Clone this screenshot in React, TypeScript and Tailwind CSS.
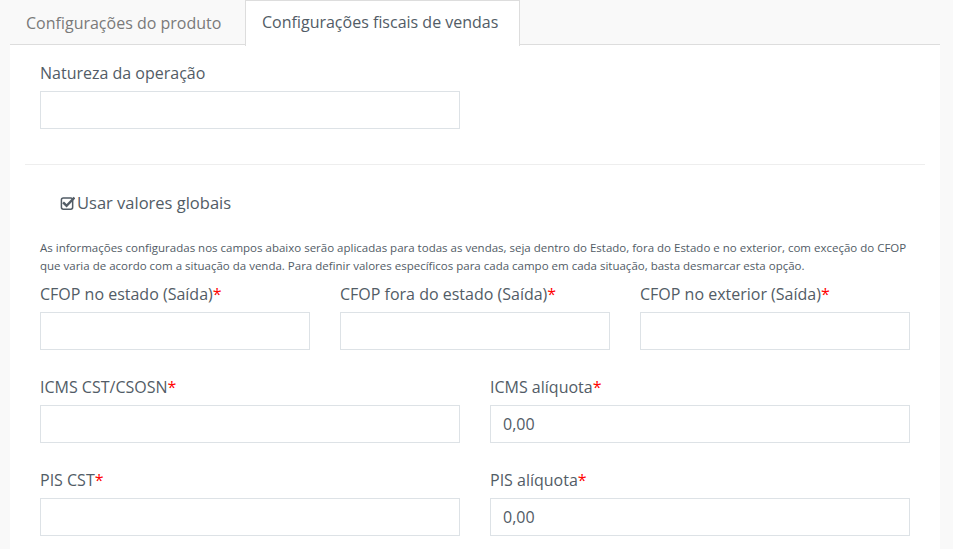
import React from "react";

const font = { fontFamily: '"Open Sans", "Liberation Sans", sans-serif' };

function Field({ label, value, required = true }: { label: string; value?: string; required?: boolean }) {
  return (
    <div className="mb-[27px]">
      <label className="block h-5 leading-5 text-[16px] text-[#525c66] mb-2 whitespace-nowrap">
        {label}
        {required && <span className="text-[#ff0000]">*</span>}
      </label>
      <div className="h-[38px] border border-[#dde2e6] bg-white px-[12px] flex items-center text-[16px] text-[#525c66]">
        {value}
      </div>
    </div>
  );
}

function CheckSquare() {
  return (
    <svg width="15" height="15" viewBox="0 0 16 16" className="text-[#525c66]">
      <rect x="1.5" y="2" width="12" height="12" rx="2" fill="none" stroke="currentColor" strokeWidth="1.6" />
      <path d="M4.2 7.6 L7 10.4 L14.6 2.6" fill="none" stroke="currentColor" strokeWidth="2.6" strokeLinecap="square" />
    </svg>
  );
}

export default function App() {
  return (
    <div className="min-h-[549px] bg-[#f9f9f9] pl-[10px]" style={font}>
      <div className="w-[930px]">
        {/* tab strip */}
        <div className="flex h-[45px] border-b border-[#dddddd]">
          <div className="w-[235px] pl-4 pt-[2px] flex items-center text-[16px] text-[#7a7a7a] whitespace-nowrap">
            Configurações do produto
          </div>
          <div className="w-[275px] pl-4 pb-[3px] flex items-center text-[16px] text-[#525c66] bg-white border border-[#dddddd] border-b-0 h-[46px] -mb-px whitespace-nowrap">
            Configurações fiscais de vendas
          </div>
        </div>

        <div className="bg-white px-[15px] pt-[18px] pb-1">
          <div className="px-[15px] w-[450px]">
            <Field label="Natureza da operação" required={false} />
          </div>

          <div className="h-px bg-[#eeeeee] mt-[35px]" />

          <div className="px-[15px]">
            <div className="mt-[28px] ml-[20px] h-5 flex items-center gap-[2px] text-[16.5px] text-[#525c66]">
              <CheckSquare />
              <span>Usar valores globais</span>
            </div>
            <p className="mt-[26px] text-[11.5px] leading-[18px] text-[#525c66] whitespace-nowrap">
              As informações configuradas nos campos abaixo serão aplicadas para todas as vendas, seja dentro do Estado, fora do Estado e no exterior, com exceção do CFOP
              <br />
              que varia de acordo com a situação da venda. Para definir valores específicos para cada campo em cada situação, basta desmarcar esta opção.
            </p>
          </div>

          <div className="mt-[9px] grid grid-cols-3">
            <div className="px-[15px]"><Field label="CFOP no estado (Saída)" /></div>
            <div className="px-[15px]"><Field label="CFOP fora do estado (Saída)" /></div>
            <div className="px-[15px]"><Field label="CFOP no exterior (Saída)" /></div>
          </div>
          <div className="grid grid-cols-2">
            <div className="px-[15px]"><Field label="ICMS CST/CSOSN" /></div>
            <div className="px-[15px]"><Field label="ICMS alíquota" value="0,00" /></div>
          </div>
          <div className="grid grid-cols-2">
            <div className="px-[15px]"><Field label="PIS CST" /></div>
            <div className="px-[15px]"><Field label="PIS alíquota" value="0,00" /></div>
          </div>
        </div>
      </div>
    </div>
  );
}
